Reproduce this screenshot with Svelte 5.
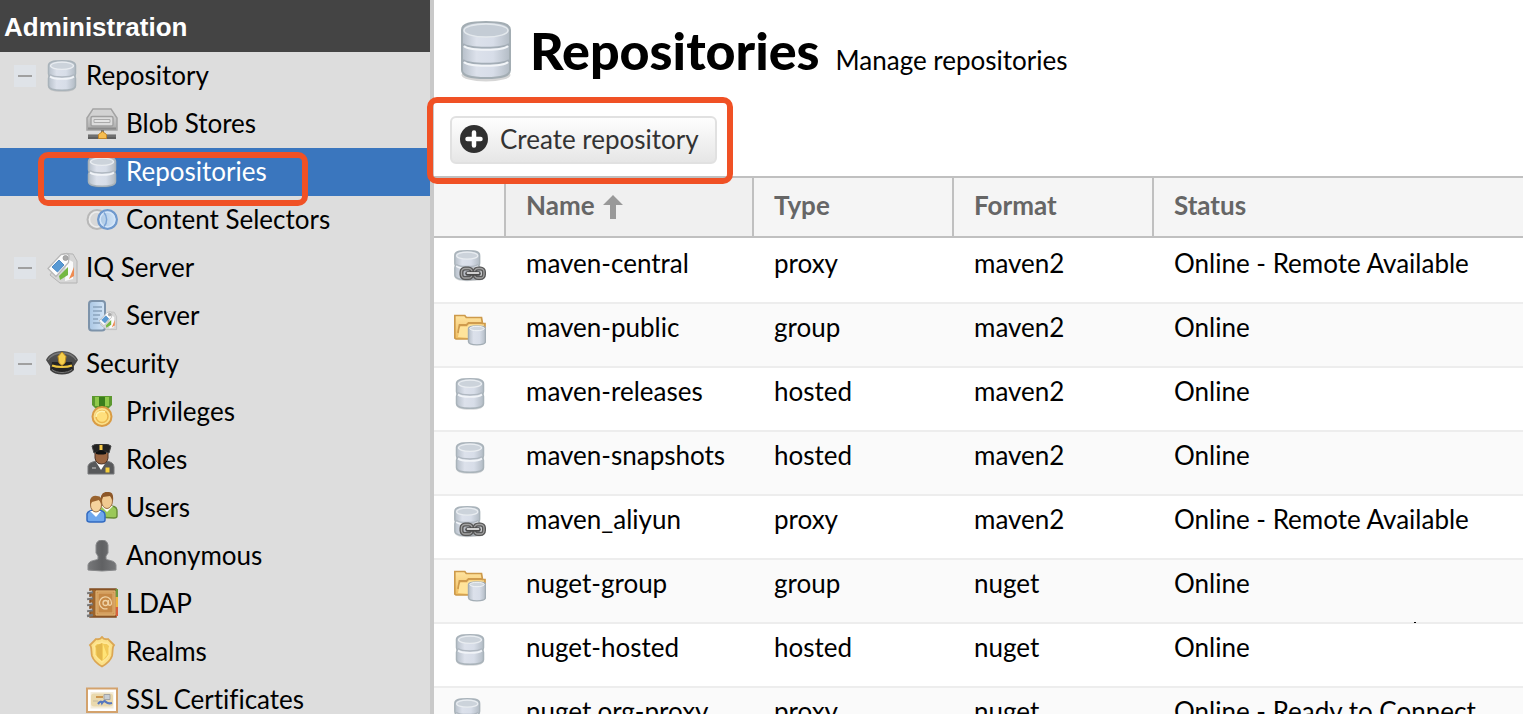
<script>
  const tree = [
    {
      label: 'Repository',
      icon: 'database',
      children: [
        { label: 'Blob Stores', icon: 'drive' },
        { label: 'Repositories', icon: 'database', selected: true },
        { label: 'Content Selectors', icon: 'selectors' }
      ]
    },
    { label: 'IQ Server', icon: 'tags', children: [{ label: 'Server', icon: 'server' }] },
    {
      label: 'Security',
      icon: 'cap',
      children: [
        { label: 'Privileges', icon: 'medal' },
        { label: 'Roles', icon: 'officer' },
        { label: 'Users', icon: 'users' },
        { label: 'Anonymous', icon: 'anonymous' },
        { label: 'LDAP', icon: 'book' },
        { label: 'Realms', icon: 'shield' },
        { label: 'SSL Certificates', icon: 'certificate' }
      ]
    }
  ];

  const repositories = [
    { name: 'maven-central', type: 'proxy', format: 'maven2', status: 'Online - Remote Available' },
    { name: 'maven-public', type: 'group', format: 'maven2', status: 'Online' },
    { name: 'maven-releases', type: 'hosted', format: 'maven2', status: 'Online' },
    { name: 'maven-snapshots', type: 'hosted', format: 'maven2', status: 'Online' },
    { name: 'maven_aliyun', type: 'proxy', format: 'maven2', status: 'Online - Remote Available' },
    { name: 'nuget-group', type: 'group', format: 'nuget', status: 'Online' },
    { name: 'nuget-hosted', type: 'hosted', format: 'nuget', status: 'Online', speck: true },
    { name: 'nuget.org-proxy', type: 'proxy', format: 'nuget', status: 'Online - Ready to Connect' }
  ];

  const typeIcons = { proxy: 'linked', group: 'folder', hosted: 'database' };
</script>

{#snippet cylinder()}
  <path d="M2 6h28v20c0 4-4 5.800-14 5.800S2 30 2 26z" fill="#7d858c" opacity=".3" />
  <path d="M2.500 5.500C2.500 2 6 .8 16 .8s13.500 1.200 13.500 4.700v8c0 1-.5 1.800-1 2.500.5.700 1 1.500 1 2.500v7c0 3.500-4.500 4.800-13.500 4.800S2.500 29 2.500 25.500v-7c0-1 .5-1.800 1-2.500-.5-.7-1-1.500-1-2.500z" fill="url(#steel)" stroke="#a9b3ba" stroke-width="1.500" />
  <ellipse cx="16" cy="5.800" rx="11.500" ry="3.600" fill="#ccd3db" stroke="#e9edf1" stroke-width="1.300" />
  <path d="M4 14.500c4 3.200 20 3.200 24 0" fill="none" stroke="#b0b8c1" stroke-width="1.500" />
  <path d="M4 16.500c4 3.200 20 3.200 24 0" fill="none" stroke="#f1f4f8" stroke-width="1.800" />
{/snippet}

{#snippet tagShapes()}
  <path d="M18 1.500l9 .5 4 7v22H14L4 23z" fill="#d6d6d6" stroke="#b4b4b4" />
  <path d="M20 6l7 4v17l-8 2z" fill="#fafafa" />
  <path d="M28 15v9l-5 3z" fill="#ee8b52" />
  <path d="M22 15v8l-8 5-1-4z" fill="#75b843" />
  <path d="M15 2.500l6-1 2 2-.5 7L10 24.500l-8-8z" fill="#fdfdfd" stroke="#b8b8b8" stroke-width="1.300" />
  <path d="M13 8l5 5-6.500 7L6 15z" fill="#5899d3" stroke="#4f8bc5" />
  <circle cx="19.500" cy="6" r="2.500" fill="#aaa" stroke="#999" stroke-width=".8" />
{/snippet}

{#snippet icon(name)}
  <svg class="icon" viewBox="0 0 32 32" aria-hidden="true">
    {#if name === 'database'}
      {@render cylinder()}
    {:else if name === 'linked'}
      <g transform="translate(-1.500 0) scale(.92 .98)">{@render cylinder()}</g>
      <rect x="5.500" y="17" width="26" height="13.500" rx="6" fill="#8b8f93" opacity=".45" />
      <rect x="7.500" y="18.500" width="10.500" height="9.500" rx="3.500" fill="none" stroke="#585858" stroke-width="4" />
      <rect x="20.500" y="18.500" width="9.500" height="9.500" rx="3.500" fill="none" stroke="#585858" stroke-width="4" />
      <rect x="7.500" y="18.500" width="10.500" height="9.500" rx="3.500" fill="none" stroke="#a2a2a2" stroke-width="1.300" />
      <rect x="20.500" y="18.500" width="9.500" height="9.500" rx="3.500" fill="none" stroke="#a2a2a2" stroke-width="1.300" />
      <path d="M13.500 23.500h11" stroke="#484848" stroke-width="4.500" stroke-linecap="round" />
      <path d="M13.500 23h11" stroke="#d0d0d0" stroke-width="1.800" stroke-linecap="round" />
    {:else if name === 'folder'}
      <path d="M.8 24V1.500h10l1.500 2H27.500l1 6H31v5L26 25H2z" fill="url(#gold)" stroke="#cd9a4b" stroke-width="1.700" />
      <path d="M4 19l1.500-8h7l2-2H29" fill="none" stroke="#cf9b4d" stroke-width="1.800" />
      <path d="M4 23l2-10h7l2-2h14v8L15 24z" fill="#ffe49b" />
      <path d="M14.500 14.500c0-3.500 17-3.500 17 0v13c0 4.500-17 4.500-17 0z" fill="url(#steel)" stroke="#a3adb5" stroke-width="1.400" />
      <ellipse cx="23" cy="14.500" rx="7.200" ry="2.200" fill="#cfd6dd" stroke="#f1f4f7" />
    {:else if name === 'drive'}
      <path d="M7 1h18l6 9v12H1V10z" fill="url(#silver)" stroke="#a3a3a3" stroke-width="1.500" />
      <path d="M8 2h16l4 6H4z" fill="#d2d2d2" />
      <rect x="5" y="8.500" width="22" height="9.500" rx="1.500" fill="#dcdcdc" stroke="#a0a0a0" stroke-width="1.400" />
      <path d="M8 11.500h16v3H8z" fill="#e4e4e4" stroke="#aaa" />
      <path d="M2 20.500h28" stroke="#8b8b8b" stroke-width="2" />
      <path d="M15 22h3v5h-3z" fill="#777" />
      <path d="M2 26.500h28v4.500H2z" fill="#606060" />
      <path d="M2 28h28" stroke="#808080" />
      <path d="M16.500 23.500l4 3v4h-8v-4z" fill="#f6bd50" stroke="#c48728" />
    {:else if name === 'selectors'}
      <circle cx="11" cy="15.500" r="9.500" fill="#d8d8d8" stroke="#b8b8b8" stroke-width="2" />
      <circle cx="11" cy="15.500" r="7.500" fill="none" stroke="#ececec" stroke-width="1.500" />
      <circle cx="21.500" cy="15.500" r="9.300" fill="url(#sky)" stroke="#6f99cd" stroke-width="2.400" />
      <circle cx="21.500" cy="15.500" r="7.400" fill="none" stroke="#d4e6fa" stroke-width="1.500" />
      <path d="M18 8.500c3.500 4 3.500 10 0 14" fill="none" stroke="#7ba4d6" stroke-width="1.500" />
    {:else if name === 'tags'}
      {@render tagShapes()}
    {:else if name === 'server'}
      <rect x="3" y="1" width="16" height="29.500" rx="3" fill="url(#sky)" stroke="#7d93aa" stroke-width="2" />
      <path d="M7 7h9M7 11h9M7 15h7M7 19h5M7 23h7" stroke="#8aa4bd" stroke-width="1.300" />
      <g transform="translate(12 11) scale(.6)">{@render tagShapes()}</g>
    {:else if name === 'cap'}
      <path d="M0 12C2 7 8 3 16 3s14 4 16 9l-4 6v4c-5 6-19 6-24 0v-4z" fill="url(#night)" />
      <path d="M2 12c3-5 8-7 14-7s11 2 14 7" fill="none" stroke="#777" stroke-width="1.300" />
      <path d="M6 14h20l1 7c-5 5-17 5-22 0z" fill="#252525" />
      <path d="M6 17.500c5 2 15 2 20 0" fill="none" stroke="#f0c843" stroke-width="2.200" />
      <path d="M6 21.500c5 4 15 4 20 0" fill="none" stroke="#777" />
      <path d="M12 8.500L16 4l4 4.500-1 6.500-3 2.500-3-2.500z" fill="#f6cf4e" stroke="#bd8b1b" />
    {:else if name === 'medal'}
      <path d="M6 0h20v9l-5 5H11L6 9z" fill="#5c982f" />
      <path d="M9 1h4v9H9zm10 0h4v9h-4z" fill="#8fc94a" />
      <path d="M13 1h6v10h-6z" fill="#397d1c" />
      <circle cx="16" cy="20.500" r="9.500" fill="#fae08b" stroke="#d99b43" stroke-width="2" />
      <circle cx="16" cy="20.500" r="6" fill="#ffdf7c" stroke="#eab54c" stroke-width="1.500" />
      <path d="M10 21a6 6 0 0 1 9-5" fill="none" stroke="#fff4b0" stroke-width="1.500" />
    {:else if name === 'officer'}
      <path d="M2 30v-8q1-4 9-5h9q8 1 8 6v7z" fill="#58595b" stroke="#77787a" />
      <path d="M10 18l5 8 5-8-2-2h-6z" fill="#fff" />
      <path d="M9 7h13v7q-1 6-6.500 6T9 14z" fill="#9a6541" stroke="#4a3023" />
      <path d="M6 2l4-2h11l4 2-2 7-3-1h-9l-3 1z" fill="#222" stroke="#444" />
      <path d="M10 8q5-3 10 0v2q-5 1-10 0z" fill="#111" />
      <path d="M13.500 1h3v5h-3z" fill="#f6c948" />
      <path d="M19.500 23.500h4v5h-4z" fill="#f6ce3a" />
      <path d="M6 24h4" stroke="#ccc" />
    {:else if name === 'users'}
      <g transform="translate(12 -1)">
        <path d="M-2 26v-7q2-5 11-4 10-1 10 5v5q0 2-3 2z" fill="#9ac858" stroke="#668b34" stroke-width="1.400" />
        <path d="M3 15l6 6 6-6" fill="#fff" />
        <ellipse cx="9" cy="10" rx="5.500" ry="7.500" fill="#f1ca91" stroke="#9b7046" />
        <path d="M3 11V5q2-5 8-4 5 0 4 9l-3-5-7 1z" fill="#8d5728" />
      </g>
      <path d="M1 28v-6q1-4 9-4 9 0 9 5v5q0 2-3 2H4q-3 0-3-2z" fill="#6fa7ed" stroke="#326ac0" stroke-width="1.500" />
      <path d="M4 19l6 6 5-6" fill="#fff" />
      <ellipse cx="10" cy="13" rx="5.500" ry="7" fill="#f5d39d" stroke="#9b7046" />
      <path d="M4 13V8q2-5 7-4 6 0 5 9l-3-5-7 2z" fill="#99632f" />
    {:else if name === 'anonymous'}
      <path d="M10 5q1-5 6-5t6 5v8l-2 3v3c3 2 9 1 10 6v5q-14 2-28 0v-5c1-5 7-4 10-6v-3l-2-3z" fill="url(#shade)" stroke="#88898b" />
    {:else if name === 'book'}
      <path d="M4 1h26v28H4z" fill="#9c632b" stroke="#814e23" stroke-width="1.500" />
      <path d="M29.500 1H32v8h-2.500z" fill="#6e9a3f" />
      <path d="M29.500 9H32v10h-2.500z" fill="#edb440" />
      <path d="M29.500 19H32v9h-2.500z" fill="#d9603b" />
      <path d="M10 3h19v24H10z" fill="#cc924d" stroke="#e5bb80" />
      <path d="M12 5h15v20H12z" fill="#c58845" stroke="#dfae72" />
      <circle cx="19.500" cy="15" r="2.500" fill="none" stroke="#efd2a5" stroke-width="1.300" />
      <path d="M22.500 12v5q3 1 3-2a6 6 0 1 0-4 5.600" fill="none" stroke="#efd2a5" stroke-width="1.300" />
      <path d="M1 5l6-1M1 11l6-1M1 17l6-1M1 23l6-1M1 28l6-1" stroke="#777" stroke-width="2.500" />
      <path d="M0 4l6-1M0 10l6-1M0 16l6-1M0 22l6-1" stroke="#ddd" />
    {:else if name === 'shield'}
      <path d="M16 1q2 3 6 2l6 6c-2 2-1 7-2 11q-2 6-10 10.500Q8 26 6 20C5 16 6 11 4 9l6-6q4 1 6-2z" fill="#fbe189" stroke="#dba653" stroke-width="1.800" />
      <path d="M16 6q2 2 5 1l3 3c-2 3 0 6-1 9q-2 4-7 7-5-3-7-7c-1-3 1-6-1-9l3-3q3 1 5-1z" fill="#f2ca58" stroke="#ffe795" stroke-width="1.500" />
      <path d="M10 10l6-3v18l-5-5z" fill="#d6a63d" opacity=".5" />
      <path d="M17 8v16l4-5z" fill="#ffe477" />
    {:else if name === 'certificate'}
      <path d="M1 4.500h30v23.500H1z" fill="#fff" stroke="#d3a26c" stroke-width="2" />
      <path d="M4 7.500h24v17.500H4z" fill="#f4ecda" stroke="#fff" />
      <rect x="5" y="9.500" width="22" height="13" rx="3" fill="#ead9ad" />
      <path d="M10 13h7" stroke="#cd9750" stroke-width="2" />
      <path d="M18 10.500h6v5h-6z" fill="#c7cdd3" stroke="#a4a4a4" />
      <path d="M12 20q3-4 4-1 2-3 4-1t6 1" fill="none" stroke="#5677bf" stroke-width="2.200" />
      <path d="M7 17h5" stroke="#c4bb9f" />
    {/if}
  </svg>
{/snippet}

<svg class="defs" width="0" height="0" aria-hidden="true">
  <defs>
    <linearGradient id="steel"><stop stop-color="#b7c0ca" /><stop offset=".3" stop-color="#dce1eb" /><stop offset=".65" stop-color="#d7dde8" /><stop offset="1" stop-color="#b3bcc5" /></linearGradient>
    <linearGradient id="gold" x2="0" y2="1"><stop stop-color="#ffe4a0" /><stop offset="1" stop-color="#efbd61" /></linearGradient>
    <linearGradient id="silver" x2="0" y2="1"><stop stop-color="#ddd" /><stop offset="1" stop-color="#aaa" /></linearGradient>
    <linearGradient id="sky"><stop stop-color="#a9c6e3" /><stop offset="1" stop-color="#d4e6f8" /></linearGradient>
    <linearGradient id="night" x2="0" y2="1"><stop stop-color="#555" /><stop offset="1" stop-color="#3c3c3c" /></linearGradient>
    <linearGradient id="shade"><stop stop-color="#77787a" /><stop offset=".5" stop-color="#606163" /><stop offset="1" stop-color="#77787a" /></linearGradient>
  </defs>
</svg>

<div class="app">
  <nav class="sidebar" aria-label="Administration">
    <h2>Administration</h2>
    <ul>
      {#each tree as group}
        <li>
          <div class="node">
            <button class="toggle" aria-label="Collapse {group.label}"></button>
            <a href="#top">{@render icon(group.icon)}<span>{group.label}</span></a>
          </div>
          <ul>
            {#each group.children as item}
              <li class="node child" class:selected={item.selected}>
                <a href="#top" aria-current={item.selected ? 'page' : undefined}>{@render icon(item.icon)}<span>{item.label}</span></a>
                {#if item.selected}<span class="callout callout-nav"></span>{/if}
              </li>
            {/each}
          </ul>
        </li>
      {/each}
    </ul>
  </nav>

  <main>
    <header>
      <svg class="title-icon" viewBox="0 0 56 64" aria-hidden="true">
        <ellipse cx="28" cy="56" rx="24.500" ry="6.500" fill="#777" opacity=".3" />
        <path d="M4 11C4 5 12 3 28 3s24 2 24 8v40c0 6-8 8-24 8S4 57 4 51z" fill="url(#steel)" stroke="#a3adb3" stroke-width="2" />
        <ellipse cx="28" cy="11.500" rx="22" ry="6.500" fill="#c4ccd5" stroke="#e4e9ed" stroke-width="1.500" />
        <path d="M5 25c5 5 41 5 46 0M5 41c5 5 41 5 46 0" fill="none" stroke="#a3adb6" stroke-width="2" />
        <path d="M6 27c5 5 39 5 44 0M6 43c5 5 39 5 44 0" fill="none" stroke="#f2f5f8" stroke-width="2" />
      </svg>
      <h1>Repositories</h1>
      <p>Manage repositories</p>
    </header>

    <div class="toolbar">
      <button class="create">
        <svg viewBox="0 0 28 28" aria-hidden="true">
          <circle cx="14" cy="14" r="14" fill="#303030" />
          <path d="M14 7.500v13M7.500 14h13" stroke="#fff" stroke-width="4.500" stroke-linecap="round" />
        </svg>
        Create repository
      </button>
      <span class="callout callout-create"></span>
    </div>

    <table>
      <colgroup><col class="c-icon" /><col class="c-name" /><col class="c-mid" /><col class="c-mid" /><col /></colgroup>
      <thead>
        <tr>
          <th aria-label="Icon"></th>
          <th class="sorted" aria-sort="ascending">
            Name
            <svg class="arrow" viewBox="0 0 20 24" aria-hidden="true"><path d="M10 0l10 10h-7v14H7V10H0z" fill="#999" /></svg>
          </th>
          <th>Type</th>
          <th>Format</th>
          <th>Status</th>
        </tr>
      </thead>
      <tbody>
        {#each repositories as repo}
          <tr>
            <td class="icon-cell">{@render icon(typeIcons[repo.type])}</td>
            <td>{repo.name}</td>
            <td>{repo.type}</td>
            <td>{repo.format}</td>
            <td>{repo.status}{#if repo.speck}<span class="speck"></span>{/if}</td>
          </tr>
        {/each}
      </tbody>
    </table>
  </main>
</div>

<style>
  :global(body) {
    margin: 0;
    background: #fff;
  }

  .app {
    display: flex;
    height: 100vh;
    overflow: hidden;
    font-family: Lato, 'Open Sans', sans-serif;
    font-size: 26px;
    line-height: 32px;
    font-variant-ligatures: none;
    color: #000;
  }

  .defs {
    position: absolute;
  }

  .icon {
    display: block;
    flex: none;
    width: 32px;
    height: 32px;
  }

  .sidebar {
    flex: none;
    width: 430px;
    border-right: 4px solid #c9c9c9;
    background: #ddd;
  }

  h2 {
    margin: 0;
    padding: 11px 4px 9px;
    background: #444;
    color: #fff;
    font: bold 26px/32px 'Liberation Sans', Arial, sans-serif;
  }

  ul {
    margin: 0;
    padding: 0;
    list-style: none;
  }

  .node {
    position: relative;
    display: flex;
    align-items: center;
    gap: 10px;
    height: 48px;
    padding-left: 14px;
  }

  .child {
    padding-left: 86px;
  }

  .node a {
    display: flex;
    align-items: center;
    gap: 8px;
    color: inherit;
    text-decoration: none;
  }

  .node a span {
    padding-bottom: 2px;
  }

  .selected {
    background: #3a76be;
    color: #fff;
  }

  .toggle {
    display: grid;
    place-items: center;
    width: 22px;
    height: 22px;
    padding: 0;
    border: 0;
    background: #dfe3e8;
  }

  .toggle::before {
    content: '';
    width: 14px;
    height: 2px;
    background: #a0a0a0;
  }

  .callout {
    position: absolute;
    z-index: 2;
    box-sizing: border-box;
    border: 6px solid #f05125;
    border-radius: 10px;
    pointer-events: none;
  }

  .callout-nav {
    left: 38px;
    top: 4px;
    width: 270px;
    height: 54px;
  }

  .callout-create {
    left: -7px;
    top: -3px;
    width: 306px;
    height: 87px;
  }

  main {
    flex: 1;
    min-width: 0;
  }

  header {
    display: flex;
    align-items: baseline;
    height: 100px;
    padding-left: 24px;
    box-sizing: border-box;
  }

  .title-icon {
    align-self: flex-start;
    width: 56px;
    height: 64px;
    margin-top: 19px;
  }

  h1 {
    margin: 0 16px;
    font-size: 52px;
    font-weight: 900;
    line-height: 100px;
  }

  header p {
    margin: 0;
  }

  .toolbar {
    position: relative;
    padding: 16px 16px 12px;
  }

  .create {
    display: flex;
    align-items: center;
    gap: 12px;
    height: 48px;
    padding: 0 16px 2px 8px;
    border: 2px solid #e1e1e1;
    border-radius: 6px;
    background: linear-gradient(#fefefe, #e6e6e6);
    color: #333;
    font: inherit;
  }

  .create svg {
    width: 28px;
    height: 28px;
  }

  table {
    width: 100%;
    border-spacing: 0;
    table-layout: fixed;
  }

  .c-icon {
    width: 72px;
  }

  .c-name {
    width: 248px;
  }

  .c-mid {
    width: 200px;
  }

  th {
    height: 62px;
    padding: 0 20px 4px;
    border: solid #c0c0c0;
    border-width: 2px 2px 2px 0;
    box-sizing: border-box;
    background: #f5f5f5;
    color: #666;
    text-align: left;
    white-space: nowrap;
  }

  th:last-child {
    border-right: 0;
  }

  .sorted {
    background: #f0f0f0;
  }

  .arrow {
    width: 20px;
    height: 24px;
    margin-left: 2px;
    vertical-align: -4px;
  }

  td {
    position: relative;
    height: 64px;
    padding: 7px 20px 20px;
    border-top: 2px solid #ededed;
    box-sizing: border-box;
    vertical-align: top;
    white-space: nowrap;
  }

  .icon-cell {
    padding-top: 10px;
  }

  tr:nth-child(even) td {
    background: #fafafa;
  }

  tbody tr:first-child td {
    border-top-color: transparent;
  }

  .speck {
    position: absolute;
    left: 260px;
    top: -2px;
    width: 2px;
    height: 1px;
    background: #000;
  }
</style>
